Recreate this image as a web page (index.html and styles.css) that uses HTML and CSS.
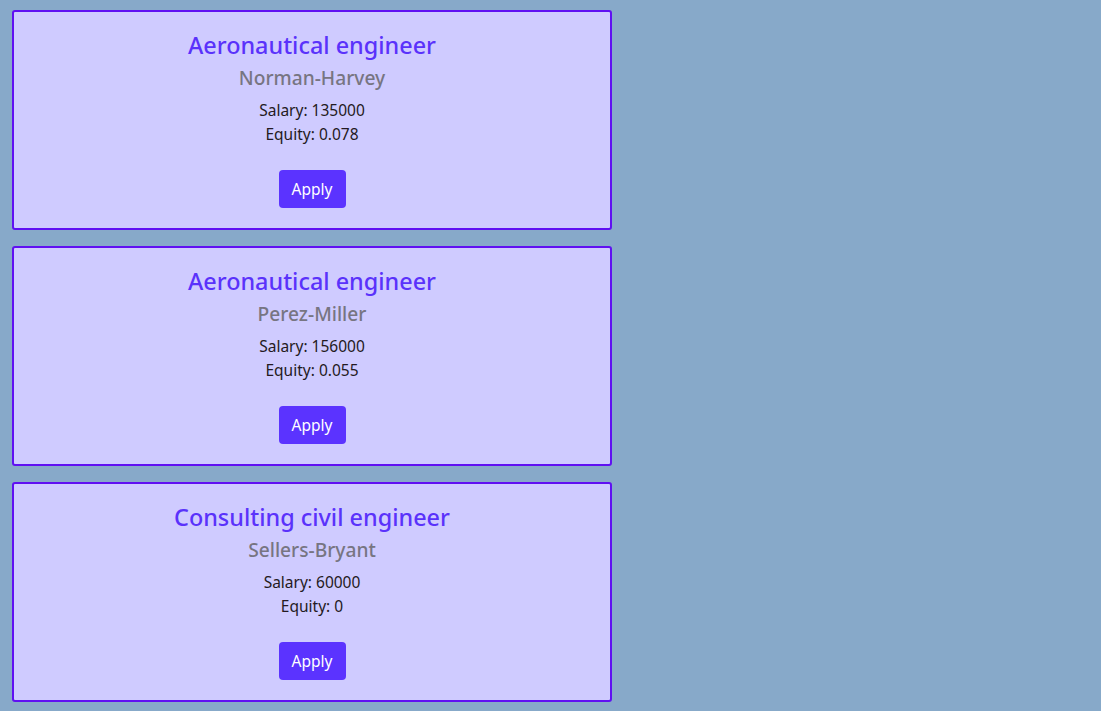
FILE: index.html
```html
<!DOCTYPE html>
<html>
<head>
<meta charset="utf-8">
<link rel="stylesheet" href="styles.css">
</head>
<body>
<main class="list">
  <section class="card">
    <h2 class="title">Aeronautical engineer</h2>
    <h3 class="company">Norman-Harvey</h3>
    <p class="line">Salary: 135000</p>
    <p class="line">Equity: 0.078</p>
    <button class="apply">Apply</button>
  </section>
  <section class="card">
    <h2 class="title">Aeronautical engineer</h2>
    <h3 class="company">Perez-Miller</h3>
    <p class="line">Salary: 156000</p>
    <p class="line">Equity: 0.055</p>
    <button class="apply">Apply</button>
  </section>
  <section class="card">
    <h2 class="title">Consulting civil engineer</h2>
    <h3 class="company">Sellers-Bryant</h3>
    <p class="line">Salary: 60000</p>
    <p class="line">Equity: 0</p>
    <button class="apply">Apply</button>
  </section>
</main>
</body>
</html>
```

FILE: styles.css
```css
html, body {
  margin: 0;
  padding: 0;
  background: #87a9c9;
}
body {
  font-family: "Noto Sans", "Open Sans", sans-serif;
  color: #241a22;
}
.list {
  display: flex;
  flex-direction: column;
  gap: 16px;
  padding: 10px 12px;
  width: 600px;
}
.card {
  box-sizing: border-box;
  width: 600px;
  height: 220px;
  background: #cfcbff;
  border: 2px solid #6010f2;
  border-radius: 3px;
  display: flex;
  flex-direction: column;
  align-items: center;
  padding: 18px 0 20px;
}
.title {
  margin: 0;
  font-size: 23.4px;
  line-height: 30px;
  font-weight: 500;
  color: #5a32fb;
}
.company {
  margin: 6px 0 8px;
  font-size: 19.2px;
  line-height: 24px;
  font-weight: 500;
  color: #777582;
}
.line {
  margin: 0;
  font-size: 15.5px;
  line-height: 24px;
}
.apply {
  margin-top: 24px;
  height: 38px;
  width: 67px;
  border: none;
  border-radius: 4px;
  background: #5b33ff;
  color: #ffffff;
  font-family: inherit;
  font-size: 15.5px;
  padding: 0;
}
```
